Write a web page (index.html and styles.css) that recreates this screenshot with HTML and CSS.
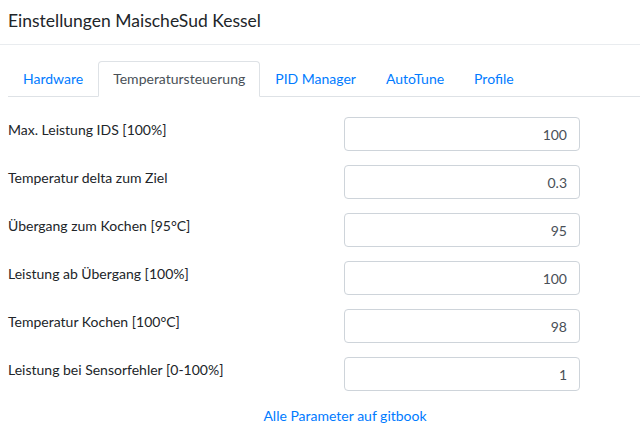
FILE: index.html
```html
<!DOCTYPE html>
<html lang="de">
<head>
    <meta charset="UTF-8">
    <meta name="viewport" content="width=device-width, initial-scale=1.0">
    <title>Einstellungen MaischeSud Kessel</title>
    <link rel="stylesheet" href="styles.css">
</head>
<body>
    <div class="modal-content">
        <!-- Header -->
        <div class="modal-header">
            <h5 class="modal-title">Einstellungen MaischeSud Kessel</h5>
        </div>

        <!-- Tabs -->
        <ul class="nav-tabs">
            <li><a class="nav-link" href="#">Hardware</a></li>
            <li><a class="nav-link active" href="#">Temperatursteuerung</a></li>
            <li><a class="nav-link" href="#">PID Manager</a></li>
            <li><a class="nav-link" href="#">AutoTune</a></li>
            <li><a class="nav-link" href="#">Profile</a></li>
        </ul>

        <div class="tab-content">
            <div class="form-row">
                <label class="form-label">Max. Leistung IDS [100%]</label>
                <input class="form-control" type="text" value="100">
            </div>
            <div class="form-row">
                <label class="form-label">Temperatur delta zum Ziel</label>
                <input class="form-control" type="text" value="0.3">
            </div>
            <div class="form-row">
                <label class="form-label">Übergang zum Kochen [95°C]</label>
                <input class="form-control" type="text" value="95">
            </div>
            <div class="form-row">
                <label class="form-label">Leistung ab Übergang [100%]</label>
                <input class="form-control" type="text" value="100">
            </div>
            <div class="form-row">
                <label class="form-label">Temperatur Kochen [100°C]</label>
                <input class="form-control" type="text" value="98">
            </div>
            <div class="form-row">
                <label class="form-label">Leistung bei Sensorfehler [0-100%]</label>
                <input class="form-control" type="text" value="1">
            </div>

            <div class="help-link">
                <a href="#">Alle Parameter auf gitbook</a>
            </div>
        </div>
    </div>
</body>
</html>
```

FILE: styles.css
```css
/* Base */
body {
    margin: 0;
    font-family: Lato, "Open Sans", sans-serif;
    font-size: 14px;
    line-height: 21px;
    color: #212529;
    background: #fff;
}

a {
    color: #007bff;
    text-decoration: none;
}

/* Header */
.modal-header {
    padding: 10px 8px 13px;
    border-bottom: 1px solid #e9ecef;
}

.modal-title {
    margin: 0;
    font-size: 17.5px;
    font-weight: 400;
    line-height: 21px;
}

/* Tabs */
.nav-tabs {
    display: flex;
    list-style: none;
    margin: 16px 0 0 8px;
    padding: 0;
    border-bottom: 1px solid #dee2e6;
}

.nav-link {
    display: block;
    padding: 6px 14px 7px;
    margin-bottom: -1px;
    border: 1px solid transparent;
    border-radius: 4px 4px 0 0;
}

.nav-link.active {
    color: #495057;
    background: #fff;
    border-color: #dee2e6 #dee2e6 #fff;
}

/* Form */
.tab-content {
    padding: 20px 8px 0;
}

.form-row {
    display: grid;
    grid-template-columns: 336px 236px;
    margin-bottom: 14px;
}

.form-label {
    padding-top: 2px;
}

.form-control {
    box-sizing: border-box;
    height: 34px;
    padding: 6px 12px;
    font: inherit;
    color: #495057;
    text-align: right;
    border: 1px solid #ced4da;
    border-radius: 4px;
}

.help-link {
    text-align: center;
    padding-left: 50px;
}
```
